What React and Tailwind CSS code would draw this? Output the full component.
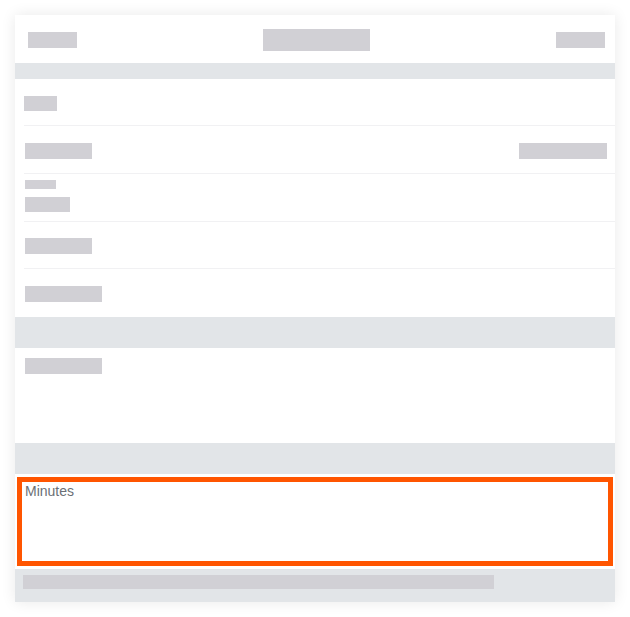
import React from "react";

const Box = ({ className = "" }) => (
  <div className={`bg-[#d1d0d5] ${className}`} />
);

const Row = ({ children, className = "" }) => (
  <div className={`flex items-center pl-[10px] pr-[8px] border-b border-[#f1f1f3] ${className}`}>
    {children}
  </div>
);

export default function App() {
  return (
    <div className="w-[630px] h-[617px] bg-white pt-[15px] pl-[15px]" style={{ fontFamily: "'Liberation Sans', Arial, sans-serif" }}>
      <div className="w-[600px] flex flex-col bg-white shadow-[0_0_14px_rgba(0,0,0,0.09)]">
        {/* header */}
        <div className="h-[48px] flex items-center justify-between pl-[13px] pr-[10px] relative">
          <Box className="w-[49px] h-[16px] mt-[2px]" />
          <Box className="w-[107px] h-[22px] mt-[1px]" />
          <Box className="w-[49px] h-[16px] mt-[2px]" />
        </div>
        <div className="h-[16px] bg-[#e2e5e8]" />

        {/* rows */}
        <div className="flex flex-col pl-[9px]">
          <Row className="h-[47px] !pl-0">
            <Box className="w-[33px] h-[15px] mt-[3px]" />
          </Row>
          <Row className="h-[48px] justify-between !pl-[1px]">
            <Box className="w-[67px] h-[16px] mt-[2px]" />
            <Box className="w-[88px] h-[16px] mt-[2px]" />
          </Row>
          <div className="h-[48px] flex flex-col pl-[1px] pt-[6px] gap-[8px] border-b border-[#f1f1f3]">
            <Box className="w-[31px] h-[9px]" />
            <Box className="w-[45px] h-[15px]" />
          </div>
          <Row className="h-[47px] !pl-[1px]">
            <Box className="w-[67px] h-[16px] mt-[2px]" />
          </Row>
          <Row className="h-[48px] !pl-[1px] border-b-0">
            <Box className="w-[77px] h-[16px] mt-[1px]" />
          </Row>
        </div>

        <div className="h-[31px] bg-[#e2e5e8]" />
        <div className="h-[95px] pl-[10px] pt-[10px]">
          <Box className="w-[77px] h-[16px]" />
        </div>
        <div className="h-[31px] bg-[#e2e5e8]" />

        {/* minutes field */}
        <div className="h-[95px] px-[2px] pt-[3px] pb-[3px]">
          <div className="h-full border-[5px] border-[#ff5500] pl-[3px]">
            <div className="text-[14px] leading-[19px] text-[#6b6f76]">Minutes</div>
          </div>
        </div>

        <div className="h-[33px] bg-[#e2e5e8] pl-[8px] pt-[6px]">
          <Box className="w-[471px] h-[14px]" />
        </div>
      </div>
    </div>
  );
}
